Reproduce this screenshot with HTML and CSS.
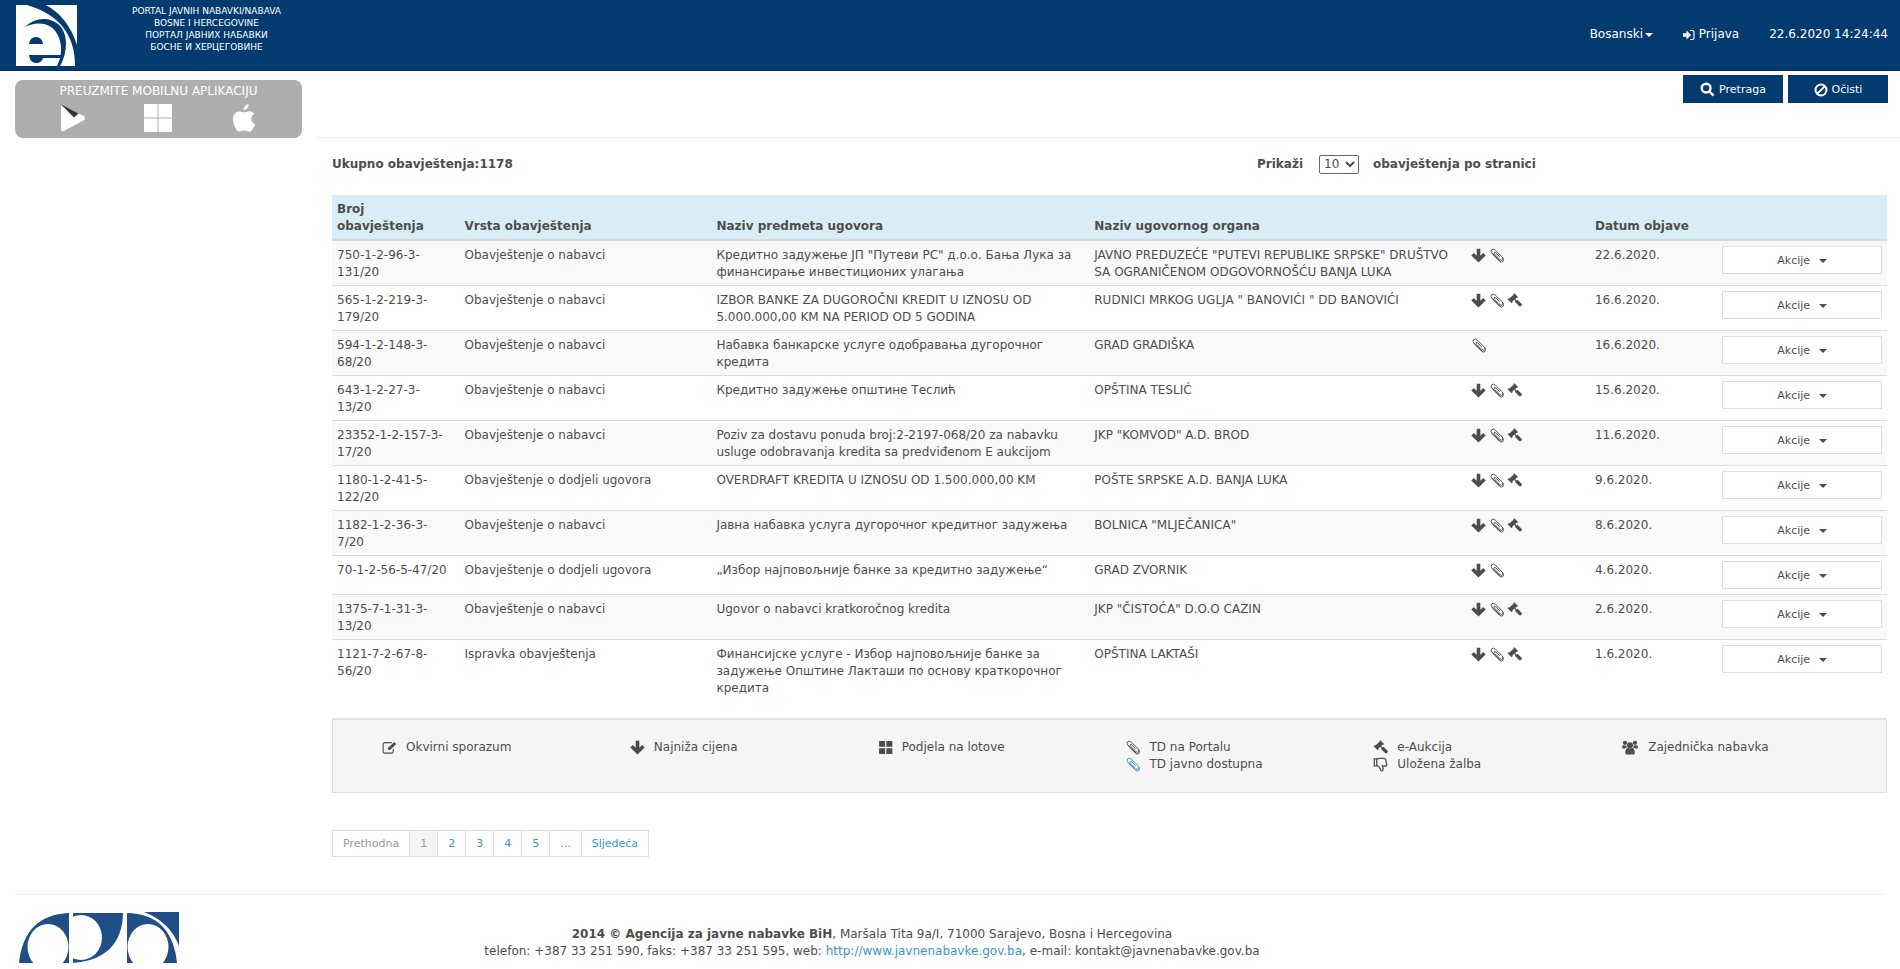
FILE: index.html
```html
<!DOCTYPE html>
<html lang="bs">
<head>
<meta charset="utf-8">
<title>Portal javnih nabavki</title>
<link rel="stylesheet" href="styles.css">
</head>
<body>
<svg class="sprite" aria-hidden="true">
  <symbol id="i-down" viewBox="0 0 14 14"><path d="M5.300.6h3.400v6.600l2.700-2.500L13.700 7.100 7 13.500.3 7.100l2.300-2.400L5.300 7.200z"/></symbol>
  <symbol id="i-clip" viewBox="0 0 14 14"><path d="M11.200 13 2.900 5.100Q1.100 3 2.500 1.600 4.100.3 6 2.100L12.400 8.400Q13.700 9.900 12.700 11 11.500 12 10.100 10.700L5 5.600Q4.300 4.800 4.900 4.200 5.500 3.700 6.300 4.500L10 8.200M2.900 5.100 9.700 12.200Q11.500 13.900 13 12.600 14.200 11.300 12.400 8.400" fill="none" stroke="currentColor" stroke-width=".9"/></symbol>
  <symbol id="i-gavel" viewBox="0 0 16 16"><path d="M7.800.3 11.800 4.300l-1.100 1.100-.6-.3-1.300 1.300 1.500 1.500.9-.7 4.300 4.200q1 1-.1 2l-.5.500q-1 .9-2-.1L8.600 9.500l.5-.9L7.600 7.100 5.700 9.100l.3.700-1.100 1.100L.6 6.700l1.100-1.100.7.300L7 1.800l-.2-.7z"/></symbol>
  <symbol id="i-edit" viewBox="0 0 16 14"><path d="M12 8.500v2.700a1.800 1.800 0 0 1-1.800 1.800H3a1.800 1.800 0 0 1-1.800-1.800V3.600A1.800 1.800 0 0 1 3 1.800h7.500" fill="none" stroke="currentColor" stroke-width="1.200"/><path d="M13 1l2.200 2.200-6.500 6.500H6.300V7.500zM7.300 8v.8H8.200z" fill-rule="evenodd"/></symbol>
  <symbol id="i-grid" viewBox="0 0 14 14"><path d="M1 1h5.600v5.400H1zM7.800 1h5.600v5.400H7.800zM1 7.700h5.600v5.400H1zM7.800 7.700h5.600v5.400H7.800z"/></symbol>
  <symbol id="i-thumb" viewBox="0 0 14 14"><path d="M1.200 1.800h2.300v6.400H1.200zM3.500 2 6 1.200h4.300q1.400.3 1.600 1.600l.9 4q.3 1.500-1.200 1.600H8.800l.6 2.500q0 2-1.300 2.300-1-.1-1.200-1.800L5.300 8.800 3.500 8.100" fill="none" stroke="currentColor" stroke-width="1.200"/></symbol>
  <symbol id="i-users" viewBox="0 0 18 16"><circle cx="9" cy="5.500" r="3.200"/><circle cx="3.700" cy="3" r="2.300"/><circle cx="14.300" cy="3" r="2.300"/><path d="M4.500 15.500q-.8-.7-.5-3.500Q4.500 8.800 6.700 8.300q2.300 1.500 4.600 0 2.200.5 2.700 3.700.3 2.800-.5 3.500zM.6 9Q.4 5.700 1.700 5.300q1.800 1 3.500.3Q5 7 5.900 7.900 4.500 8 3.800 9zM17.400 9q.2-3.300-1.100-3.700-1.800 1-3.500.3.200 1.400-.7 2.300 1.400.1 2.100 1.100z"/></symbol>
  <symbol id="i-search" viewBox="0 0 16 16"><path d="M6.500 1.800a4.700 4.700 0 1 0 0 9.400 4.700 4.700 0 0 0 0-9.400zM10 10l4.500 4.500" fill="none" stroke="currentColor" stroke-width="2.600"/></symbol>
  <symbol id="i-ban" viewBox="0 0 14 14"><path d="M7 1.500a5.500 5.500 0 1 0 0 11 5.500 5.500 0 0 0 0-11zM3.100 10.900l7.800-7.800" fill="none" stroke="currentColor" stroke-width="2"/></symbol>
  <symbol id="i-login" viewBox="0 0 12 12"><path d="M0 4.200h3.500V1.600L8.200 6l-4.700 4.400V7.800H0z"/><path d="M7 1.500h2.500A1.500 1.500 0 0 1 11 3v6a1.500 1.500 0 0 1-1.500 1.500H7" fill="none" stroke="currentColor" stroke-width="1.200"/></symbol>
</svg>

<header class="topbar">
  <div class="brand">
    <svg class="brand-logo" viewBox="0 0 61 61" role="img" aria-label="e"><path fill="#fff" d="M0 0h61v61H0z"/><path fill="#033b70" d="M11 0h19Q52 12 61 40v21h-2Q59 14 11 0zM9 22Q18 13 30 14 49 17 50 38q0 13-6 23h-3q5-10 4-20Q42 22 28 19 18 17 9 22zM13 39q1-7 7-7t7 7zM13 50h32v3H27q-1 5-7 5t-7-8z"/></svg>
    <div class="brand-text">PORTAL JAVNIH NABAVKI/NABAVA<br>BOSNE I HERCEGOVINE<br>ПОРТАЛ ЈАВНИХ НАБАВКИ<br>БОСНЕ И ХЕРЦЕГОВИНЕ</div>
  </div>
  <nav class="topnav">
    <a href="#">Bosanski<span class="caret small"></span></a>
    <a href="#"><svg class="login"><use href="#i-login"/></svg> Prijava</a>
    <span>22.6.2020 14:24:44</span>
  </nav>
</header>

<div class="page">
  <aside class="side">
    <div class="app-box">
      <div>PREUZMITE MOBILNU APLIKACIJU</div>
      <div class="stores">
        <a href="#" aria-label="Google Play"><svg viewBox="0 0 28 28"><path fill="#fff" d="M2 1.500 25 12q2 2 0 4L5 27q-3 1-3-2z"/><path fill="#333" d="M2 .6 19.500 9.500 15 13.500z"/></svg></a>
        <a href="#" aria-label="Windows"><svg viewBox="0 0 28 28"><path fill="#fff" d="M0 0h13.500v13.500H0zM14.500 0H28v13.500H14.500zM0 14.500h13.500V28H0zM14.500 14.500H28V28H14.500z"/></svg></a>
        <a href="#" aria-label="Apple"><svg viewBox="0 0 28 28"><path fill="#fff" d="M13.500 6.500Q13 2 18.500 0q.7 4.500-5 6.500zM13.700 8.300q1.500 0 3.500-.9 4.500-1 7.300 2.300-3.300 2-3.200 5.300.2 3.700 3.900 5.300-1 3.300-3.500 6.100-1.700 1.900-4 .9-3.500-1.400-6.700 0-2.500 1-4.300-1.200Q3.500 22 3 16.500 2.600 11 6 8.600q2-1.500 4.500-1.100 2 .6 3.200.8z"/></svg></a>
      </div>
    </div>
  </aside>

  <main class="main">
    <div class="toolbar">
      <button class="btn-primary" type="button"><svg class="ic"><use href="#i-search"/></svg>Pretraga</button>
      <button class="btn-primary" type="button"><svg class="ic ban"><use href="#i-ban"/></svg>Očisti</button>
    </div>

    <div class="content">
      <div class="summary">
        <strong>Ukupno obavještenja:1178</strong>
        <div class="per-page">
          <label for="size">Prikaži</label>
          <select id="size"><option>10</option><option>20</option></select>
          <strong>obavještenja po stranici</strong>
        </div>
      </div>

      <table class="notices">
        <colgroup><col class="c-no"><col class="c-type"><col class="c-name"><col class="c-org"><col class="c-icons"><col class="c-date"><col class="c-act"></colgroup>
        <thead><tr><th>Broj obavještenja</th><th>Vrsta obavještenja</th><th>Naziv predmeta ugovora</th><th>Naziv ugovornog organa</th><th></th><th>Datum objave</th><th></th></tr></thead>
        <tbody>
          <tr><td>750-1-2-96-3-131/20</td><td>Obavještenje o nabavci</td><td>Кредитно задужење ЈП "Путеви РС" д.о.о. Бања Лука за финансирање инвестиционих улагања</td><td>JAVNO PREDUZEĆE "PUTEVI REPUBLIKE SRPSKE" DRUŠTVO SA OGRANIČENOM ODGOVORNOŠĆU BANJA LUKA</td><td><svg class="ic"><use href="#i-down"/></svg><svg class="ic"><use href="#i-clip"/></svg></td><td>22.6.2020.</td><td><button class="act" type="button">Akcije<span class="caret"></span></button></td></tr>
          <tr><td>565-1-2-219-3-179/20</td><td>Obavještenje o nabavci</td><td>IZBOR BANKE ZA DUGOROČNI KREDIT U IZNOSU OD 5.000.000,00 KM NA PERIOD OD 5 GODINA</td><td>RUDNICI MRKOG UGLJA " BANOVIĆI " DD BANOVIĆI</td><td><svg class="ic"><use href="#i-down"/></svg><svg class="ic"><use href="#i-clip"/></svg><svg class="ic"><use href="#i-gavel"/></svg></td><td>16.6.2020.</td><td><button class="act" type="button">Akcije<span class="caret"></span></button></td></tr>
          <tr><td>594-1-2-148-3-68/20</td><td>Obavještenje o nabavci</td><td>Набавка банкарске услуге одобравања дугорочног кредита</td><td>GRAD GRADIŠKA</td><td><svg class="ic"><use href="#i-clip"/></svg></td><td>16.6.2020.</td><td><button class="act" type="button">Akcije<span class="caret"></span></button></td></tr>
          <tr><td>643-1-2-27-3-<br>13/20</td><td>Obavještenje o nabavci</td><td>Кредитно задужење општине Теслић</td><td>OPŠTINA TESLIĆ</td><td><svg class="ic"><use href="#i-down"/></svg><svg class="ic"><use href="#i-clip"/></svg><svg class="ic"><use href="#i-gavel"/></svg></td><td>15.6.2020.</td><td><button class="act" type="button">Akcije<span class="caret"></span></button></td></tr>
          <tr><td>23352-1-2-157-3-17/20</td><td>Obavještenje o nabavci</td><td>Poziv za dostavu ponuda broj:2-2197-068/20 za nabavku usluge odobravanja kredita sa predviđenom E aukcijom</td><td>JKP "KOMVOD" A.D. BROD</td><td><svg class="ic"><use href="#i-down"/></svg><svg class="ic"><use href="#i-clip"/></svg><svg class="ic"><use href="#i-gavel"/></svg></td><td>11.6.2020.</td><td><button class="act" type="button">Akcije<span class="caret"></span></button></td></tr>
          <tr><td>1180-1-2-41-5-122/20</td><td>Obavještenje o dodjeli ugovora</td><td>OVERDRAFT KREDITA U IZNOSU OD 1.500.000,00 KM</td><td>POŠTE SRPSKE A.D. BANJA LUKA</td><td><svg class="ic"><use href="#i-down"/></svg><svg class="ic"><use href="#i-clip"/></svg><svg class="ic"><use href="#i-gavel"/></svg></td><td>9.6.2020.</td><td><button class="act" type="button">Akcije<span class="caret"></span></button></td></tr>
          <tr><td>1182-1-2-36-3-<br>7/20</td><td>Obavještenje o nabavci</td><td>Јавна набавка услуга дугорочног кредитног задужења</td><td>BOLNICA "MLJEČANICA"</td><td><svg class="ic"><use href="#i-down"/></svg><svg class="ic"><use href="#i-clip"/></svg><svg class="ic"><use href="#i-gavel"/></svg></td><td>8.6.2020.</td><td><button class="act" type="button">Akcije<span class="caret"></span></button></td></tr>
          <tr><td>70-1-2-56-5-47/20</td><td>Obavještenje o dodjeli ugovora</td><td>„Избор најповољније банке за кредитно задужење“</td><td>GRAD ZVORNIK</td><td><svg class="ic"><use href="#i-down"/></svg><svg class="ic"><use href="#i-clip"/></svg></td><td>4.6.2020.</td><td><button class="act" type="button">Akcije<span class="caret"></span></button></td></tr>
          <tr><td>1375-7-1-31-3-13/20</td><td>Obavještenje o nabavci</td><td>Ugovor o nabavci kratkoročnog kredita</td><td>JKP "ČISTOĆA" D.O.O CAZIN</td><td><svg class="ic"><use href="#i-down"/></svg><svg class="ic"><use href="#i-clip"/></svg><svg class="ic"><use href="#i-gavel"/></svg></td><td>2.6.2020.</td><td><button class="act" type="button">Akcije<span class="caret"></span></button></td></tr>
          <tr><td>1121-7-2-67-8-56/20</td><td>Ispravka obavještenja</td><td>Финансијске услуге - Избор најповољније банке за задужење Општине Лакташи по основу краткорочног кредита</td><td>OPŠTINA LAKTAŠI</td><td><svg class="ic"><use href="#i-down"/></svg><svg class="ic"><use href="#i-clip"/></svg><svg class="ic"><use href="#i-gavel"/></svg></td><td>1.6.2020.</td><td><button class="act" type="button">Akcije<span class="caret"></span></button></td></tr>
        </tbody>
      </table>

      <div class="legend">
        <div><p><svg class="ic"><use href="#i-edit"/></svg>Okvirni sporazum</p></div>
        <div><p><svg class="ic"><use href="#i-down"/></svg>Najniža cijena</p></div>
        <div><p><svg class="ic"><use href="#i-grid"/></svg>Podjela na lotove</p></div>
        <div><p><svg class="ic"><use href="#i-clip"/></svg>TD na Portalu</p><p><svg class="ic blue"><use href="#i-clip"/></svg>TD javno dostupna</p></div>
        <div><p><svg class="ic"><use href="#i-gavel"/></svg>e-Aukcija</p><p><svg class="ic"><use href="#i-thumb"/></svg>Uložena žalba</p></div>
        <div><p><svg class="ic wide"><use href="#i-users"/></svg>Zajednička nabavka</p></div>
      </div>

      <nav class="pager" aria-label="Stranice">
        <a class="off" href="#">Prethodna</a><a class="off current" href="#">1</a><a href="#">2</a><a href="#">3</a><a href="#">4</a><a href="#">5</a><a href="#">...</a><a href="#">Sljedeća</a>
      </nav>
    </div>
  </main>
</div>

<footer class="footer">
  <svg class="agency" viewBox="0 0 160 51" role="img" aria-label="Agencija za javne nabavke"><path fill="#1f4f86" d="M54 1h50q-1 46-50 50z"/><ellipse fill="#fff" cx="62" cy="25.500" rx="21" ry="22.500"/><path fill="#1f4f86" d="M0 51Q5 3 50 1v50zM108 1q45 1 50 50h-50z"/><g fill="#fff"><ellipse cx="29" cy="35" rx="20.500" ry="23"/><ellipse cx="129" cy="35" rx="20.500" ry="23"/></g><path fill="#1f4f86" d="M125 0h35v34Q151 10 125 0z"/></svg>
  <div class="foot-text"><strong>2014 © Agencija za javne nabavke BiH</strong>, Maršala Tita 9a/I, 71000 Sarajevo, Bosna i Hercegovina<br>telefon: +387 33 251 590, faks: +387 33 251 595, web: <a href="#">http://www.javnenabavke.gov.ba</a>, e-mail: kontakt@javnenabavke.gov.ba</div>
</footer>
</body>
</html>
```
FILE: styles.css
```css
* { box-sizing: border-box; }
body { margin: 0; min-height: 100vh; font: 12px/17px Verdana, "DejaVu Sans", sans-serif; color: #4d4d4d; background: #fff; }
a { color: #3a96c8; text-decoration: none; }
p { margin: 0; }
svg { fill: currentColor; }
.sprite { display: none; }
.ic { width: 15px; height: 15px; margin-top: 1px; vertical-align: top; }
.caret { display: inline-block; margin-left: 9px; border: 4px solid transparent; border-top-color: currentColor; border-bottom: 0; vertical-align: middle; }
.caret.small { margin-left: 2px; }

.topbar { display: flex; justify-content: space-between; min-height: 71px; padding: 5px 12px 4px 16px; background: #033b70; border-bottom: 1px solid #022c55; color: #fff; }
.brand { display: flex; gap: 55px; }
.brand-logo { width: 61px; height: 61px; }
.brand-text { font-size: 9px; line-height: 12px; text-align: center; }
.topnav { display: flex; align-items: center; gap: 30px; padding-bottom: 2px; }
.topnav a { color: #fff; }
.login { width: 12px; height: 12px; vertical-align: middle; }

.page { display: flex; }
.side { flex: 0 0 317px; padding: 9px 15px; }
.app-box { padding: 3px 0 6px; border-radius: 8px; background: #aeaeae; color: #fff; text-align: center; }
.stores { display: flex; justify-content: space-around; padding: 4px 15px 0; }
.stores a, .stores svg { display: block; width: 28px; height: 28px; }
.main { flex: 1; min-width: 0; }
.toolbar { display: flex; justify-content: flex-end; align-items: flex-start; gap: 5px; height: 67px; padding: 4px 12px; border-bottom: 1px solid #eee; }
.btn-primary { display: flex; align-items: center; justify-content: center; gap: 4px; width: 100px; height: 28px; padding: 0; border: 0; background: #033b70; color: #fff; font: inherit; font-size: 11px; }
.btn-primary .ban { width: 14px; height: 14px; }
.content { padding: 14px 13px 0 15px; }
.summary { display: grid; grid-template-columns: 925px 1fr; align-items: center; margin-bottom: 19px; height: 24px; }
.per-page { display: flex; align-items: center; gap: 14px; font-weight: bold; }
.per-page select { height: 19px; width: 40px; margin-left: 2px; padding: 0; border: 1px solid #666; border-radius: 2px; background: #fff; color: #4d4d4d; font: inherit; font-weight: normal; }

.notices { width: 100%; table-layout: fixed; border-collapse: separate; border-spacing: 0; }
.c-no { width: 8.2%; } .c-type { width: 16.2%; } .c-name { width: 24.3%; } .c-org { width: 24.2%; } .c-icons { width: 8%; } .c-date { width: 8.2%; } .c-act { width: 10.9%; }
.notices th, .notices td { padding: 6px 5px 4px; text-align: left; vertical-align: top; }
.notices td:last-child { padding: 5px; }
.notices th { background: #d9edf7; vertical-align: bottom; border-bottom: 2px solid #d5dce0; }
.notices td { border-bottom: 1px solid #ddd; }
.notices tr:last-child td { border-bottom: 0; }
.notices tbody tr:nth-child(odd) { background: #f9f9f9; }
.notices tbody tr:last-child { background: #fff; }
.notices td .ic { margin-right: 3px; }
.act { display: block; width: 100%; height: 28px; border: 1px solid #ddd; background: #fff; color: #4d4d4d; font: inherit; font-size: 11px; }

.legend { display: grid; grid-template-columns: repeat(6, 1fr); margin-top: 17px; padding: 19px 17px 19px 49px; min-height: 74px; border: 1px solid #ddd; border-top: 2px solid #e3e3e3; background: #f5f5f5; }
.legend .ic { margin-right: 9px; }
.legend .wide { width: 18px; }
.legend .blue { color: #3a96c8; }

.pager { display: flex; margin-top: 37px; font-size: 11px; }
.pager a { padding: 4px 10px; border: 1px solid #ddd; }
.pager a + a { border-left: 0; }
.pager .off { color: #999; }
.pager .current { background: #f5f5f5; }

.footer { display: grid; grid-template-columns: 160px 1fr 316px; margin: 37px 15px 0; padding: 17px 4px 5px; border-top: 1px solid #eee; }
.agency { width: 160px; height: 51px; }
.foot-text { padding-top: 14px; text-align: center; }
```
